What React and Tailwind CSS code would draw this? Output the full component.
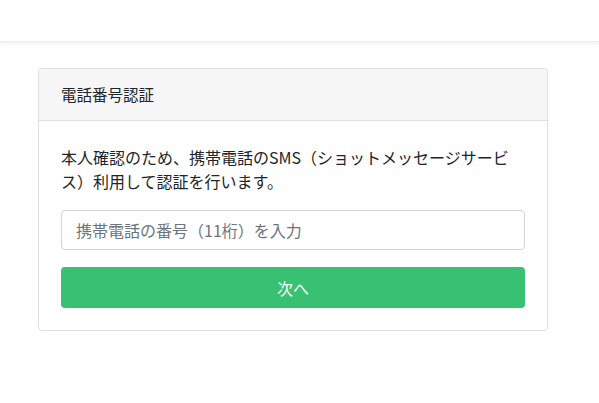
export default function App() {
  const font = { fontFamily: '"Noto Sans CJK JP", "Noto Sans", sans-serif' };
  return (
    <div className="min-h-[403px] w-full bg-white text-[#212529]" style={font}>
      {/* Top nav */}
      <div className="h-[42px] bg-white shadow-[0_2px_4px_rgba(0,0,0,0.06)] border-b border-[#ececec]" />

      {/* Card */}
      <div className="ml-[38px] mt-[26px] w-[510px] rounded border border-[#dfdfdf] bg-white">
        <div className="flex h-[52px] items-center border-b border-[#dfdfdf] bg-[#f6f6f6] px-[22px] text-[15.5px] rounded-t">
          電話番号認証
        </div>
        <div className="px-[22px] pt-[24px] pb-[22px]">
          <p className="text-[16px] leading-[24px]">
            本人確認のため、携帯電話のSMS（ショットメッセージサービス）利用して認証を行います。
          </p>
          <input
            className="mt-[17px] block h-[40px] w-full rounded border border-[#ced4da] px-[14px] text-[16px] placeholder-[#6c757d] outline-none"
            placeholder="携帯電話の番号（11桁）を入力"
          />
          <button className="mt-[17px] block h-[41px] w-full rounded bg-[#38c172] text-[16px] text-white">
            次へ
          </button>
        </div>
      </div>
    </div>
  );
}
